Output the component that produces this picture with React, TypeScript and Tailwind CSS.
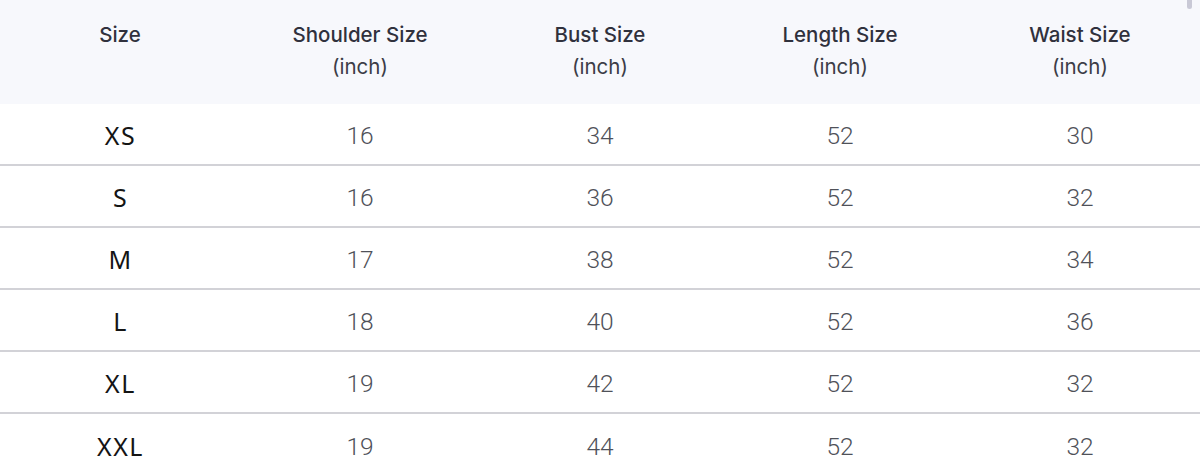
import React from 'react';

const rows = [
  { size: 'XS', shoulder: 16, bust: 34, length: 52, waist: 30 },
  { size: 'S', shoulder: 16, bust: 36, length: 52, waist: 32 },
  { size: 'M', shoulder: 17, bust: 38, length: 52, waist: 34 },
  { size: 'L', shoulder: 18, bust: 40, length: 52, waist: 36 },
  { size: 'XL', shoulder: 19, bust: 42, length: 52, waist: 32 },
  { size: 'XXL', shoulder: 19, bust: 44, length: 52, waist: 32 },
];

const headers = ['Shoulder Size', 'Bust Size', 'Length Size', 'Waist Size'];

export default function App() {
  return (
    <div className="relative w-[1200px] h-[474px] overflow-hidden bg-white">
      {/* scrollbar thumb */}
      <div className="absolute right-[8px] top-0 w-[5px] h-[9px] rounded-b-full bg-[#c9c9d6]" />

      <div className="grid grid-cols-5 h-[104px] bg-[#f7f8fc] pt-[19px] font-['Inter',sans-serif] text-[20.5px] leading-[32px] text-[#30313d]">
        <div className="text-center font-medium">Size</div>
        {headers.map((h) => (
          <div key={h} className="text-center">
            <div className="font-medium">{h}</div>
            <div className="text-[#3c3d47]">(inch)</div>
          </div>
        ))}
      </div>

      {rows.map((r, i) => (
        <div
          key={r.size}
          className={`grid grid-cols-5 h-[62px] items-center pt-[4px] ${i < rows.length - 1 ? 'border-b-2 border-[#d2d2d7]' : ''}`}
        >
          <div className="text-center pl-[1px] font-['Noto_Sans',sans-serif] text-[25px] tracking-[1.5px] text-[#141414]">{r.size}</div>
          {[r.shoulder, r.bust, r.length, r.waist].map((v, j) => (
            <div key={j} className="text-center font-['Roboto',sans-serif] text-[24.5px] font-light text-[#4f5159]">
              {v}
            </div>
          ))}
        </div>
      ))}
    </div>
  );
}
